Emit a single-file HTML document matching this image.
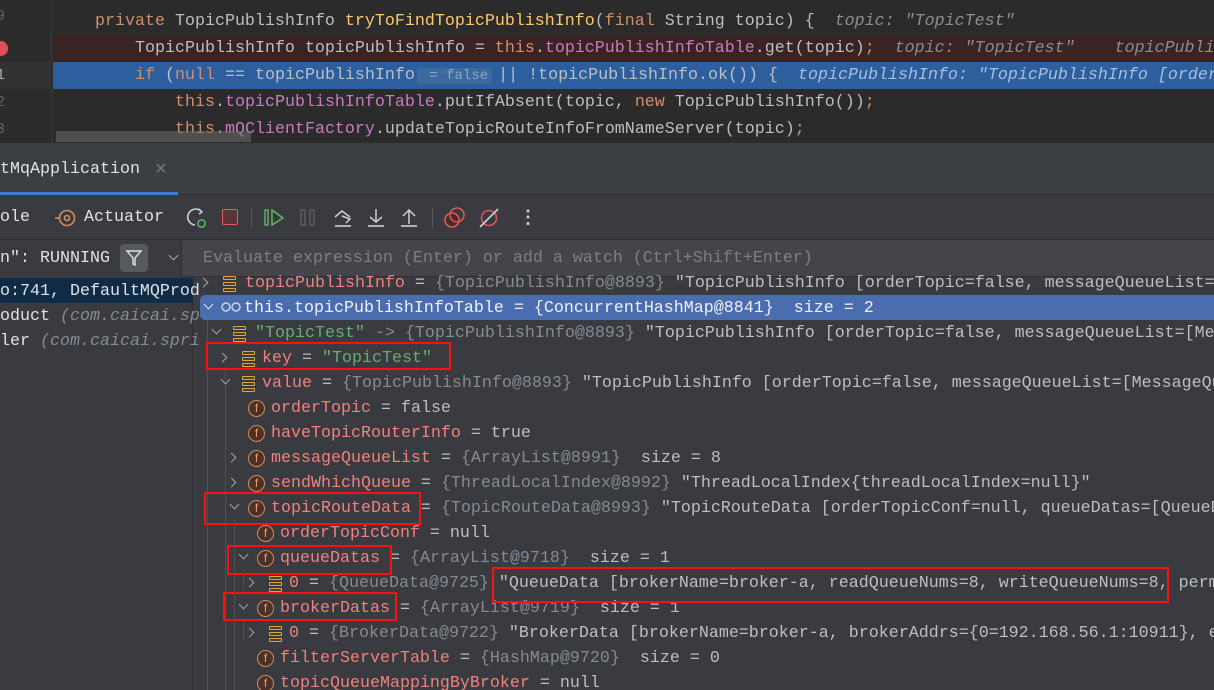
<!DOCTYPE html>
<html><head><meta charset="utf-8">
<style>
*{margin:0;padding:0;box-sizing:border-box}
html,body{width:1214px;height:690px;overflow:hidden}
body{background:#393b40;font-family:"Liberation Mono",monospace;font-size:16.67px;color:#bcbec4}
#wrap{position:relative;width:1214px;height:690px;overflow:hidden}
.a{position:absolute;white-space:pre}
.code{position:absolute;left:0;top:0;width:1214px;height:143px;background:#2b2b2b;overflow:hidden}
.cl{position:absolute;left:0;width:1214px;height:27px;line-height:27px;white-space:pre}
.kw{color:#cf8e6d}.fd{color:#c77dbb}.mt{color:#ffc66d}.hint{color:#8a8d92;font-style:italic}
.n{color:#f0817d}.g{color:#868a91}.s{color:#6aab73}
.chev{position:absolute;width:7px;height:7px;border-right:1.6px solid #a0a3a8;border-bottom:1.6px solid #a0a3a8}
.cr{transform:rotate(-45deg)}.cd{transform:rotate(45deg)}
.st{position:absolute;width:13px;height:16px}
.st i{display:block;height:4px;border:1.5px solid #d9a843;border-radius:1px;margin-bottom:2px;background:#4a4030}
.f{position:absolute;width:17px;height:17px;border:1.5px solid #d98a5c;border-radius:50%;background:#4b3228;color:#e89a6c;font-size:12px;line-height:14px;text-align:center;font-family:"Liberation Sans",sans-serif}
.box{position:absolute;border:2px solid #ff1010}
</style></head><body><div id="wrap">
<div class="code">
 <div style="position:absolute;left:0;top:0;width:52px;height:143px;background:#2b2b2b;border-right:1px solid #3a3a3a"></div>
 <div style="position:absolute;left:0;top:62px;width:52px;height:27px;background:#323232"></div>
 <div style="position:absolute;left:53px;top:35px;width:1161px;height:27px;background:#3a2323"></div>
 <div style="position:absolute;left:53px;top:62px;width:1161px;height:27px;background:#2d5f9e"></div>
 <div class="a" style="left:-4px;top:8px;color:#666;font-size:15px">9</div>
 <div class="a" style="left:-4px;top:62px;line-height:27px;color:#aaa;font-size:15px">1</div>
 <div class="a" style="left:-4px;top:89px;line-height:27px;color:#666;font-size:15px">2</div>
 <div class="a" style="left:-4px;top:116px;line-height:27px;color:#666;font-size:15px">3</div>
 <div style="position:absolute;left:-6px;top:41px;width:14px;height:15px;border-radius:50%;background:#e0505a"></div>
 <div class="cl" style="top:8px;left:95px"><span class="kw">private </span>TopicPublishInfo <span class="mt">tryToFindTopicPublishInfo</span>(<span class="kw">final </span>String topic) {  <span class="hint">topic: "TopicTest"</span></div>
 <div class="cl" style="top:35px;left:135px">TopicPublishInfo topicPublishInfo = <span class="kw">this</span>.<span class="fd">topicPublishInfoTable</span>.get(topic)<span class="kw">;</span>  <span class="hint">topic: "TopicTest"    topicPublishInfo</span></div>
 <div class="cl" style="top:62px;left:135px"><span class="kw">if </span>(<span class="kw">null </span>== topicPublishInfo<span style="background:#3d6a9e;color:#8fa8c4;border-radius:3px;font-size:14px;padding:0 4px;margin:0 6px 0 2px"> = false</span>|| !topicPublishInfo.ok()) {  <span class="hint" style="color:#a8bfdc">topicPublishInfo: "TopicPublishInfo [orderTopic</span></div>
 <div class="cl" style="top:89px;left:175px"><span class="kw">this</span>.<span class="fd">topicPublishInfoTable</span>.putIfAbsent(topic, <span class="kw">new </span>TopicPublishInfo())<span class="kw">;</span></div>
 <div class="cl" style="top:116px;left:175px"><span class="kw">this</span>.<span class="fd">mQClientFactory</span>.updateTopicRouteInfoFromNameServer(topic)<span class="kw">;</span></div>
 <div style="position:absolute;left:56px;top:131px;width:195px;height:11px;background:rgba(110,110,110,.55)"></div>
</div>
<div style="position:absolute;left:0;top:143px;width:1214px;height:52px;background:#3b3e42;border-bottom:1px solid #2e3033"></div>
<div class="a" style="left:0;top:158px;line-height:24px;color:#dfe1e5">tMqApplication</div>
<div class="a" style="left:155px;top:157px;line-height:24px;color:#777;font-family:'Liberation Sans',sans-serif;font-size:20px">×</div>
<div style="position:absolute;left:0;top:192px;width:178px;height:3px;background:#3d7ece"></div>
<div style="position:absolute;left:0;top:196px;width:1214px;height:44px;background:#393b40;border-bottom:1px solid #2e3033"></div>
<div class="a" style="left:0;top:206px;line-height:24px;color:#dfe1e5">ole</div>
<svg class="a" style="left:55px;top:208px" width="22" height="20"><circle cx="12" cy="10" r="7.5" fill="none" stroke="#d98a5c" stroke-width="1.6"/><circle cx="12" cy="10" r="2.5" fill="none" stroke="#d98a5c" stroke-width="1.6"/><line x1="0" y1="10" x2="5" y2="10" stroke="#d98a5c" stroke-width="1.6"/></svg>
<div class="a" style="left:84px;top:206px;line-height:24px;color:#dfe1e5">Actuator</div>
<svg class="a" style="left:186px;top:207px" width="24" height="24"><path d="M15 4 A8 8 0 1 0 9 18" fill="none" stroke="#ced0d6" stroke-width="1.6"/><path d="M13 2 L16 5 L13 7" fill="none" stroke="#ced0d6" stroke-width="1.5"/><rect x="12" y="13" width="7" height="7" rx="3" fill="none" stroke="#5fb865" stroke-width="1.5"/></svg>
<div style="position:absolute;left:222px;top:209px;width:16px;height:16px;border:1.6px solid #e55b5b;border-radius:2px;background:#5b3434"></div>
<div style="position:absolute;left:251px;top:208px;width:1px;height:20px;background:#55585c"></div>
<svg class="a" style="left:264px;top:208px" width="22" height="20"><rect x="1" y="2" width="3" height="15" fill="none" stroke="#5fb865" stroke-width="1.4"/><path d="M8 2 L19 10 L8 17 Z" fill="none" stroke="#5fb865" stroke-width="1.5"/></svg>
<svg class="a" style="left:300px;top:208px" width="16" height="20"><rect x="1" y="2" width="4" height="15" fill="none" stroke="#5c5f63" stroke-width="1.4"/><rect x="10" y="2" width="4" height="15" fill="none" stroke="#5c5f63" stroke-width="1.4"/></svg>
<svg class="a" style="left:333px;top:207px" width="20" height="22"><path d="M2 10 L9 4 L17 10 M9 9 L17 12 L13 16" fill="none" stroke="#ced0d6" stroke-width="1.5"/><line x1="2" y1="19" x2="18" y2="19" stroke="#ced0d6" stroke-width="1.6"/></svg>
<svg class="a" style="left:366px;top:207px" width="20" height="22"><path d="M10 2 V15 M4 10 L10 15 L16 10" fill="none" stroke="#ced0d6" stroke-width="1.5"/><line x1="2" y1="19" x2="18" y2="19" stroke="#ced0d6" stroke-width="1.6"/></svg>
<svg class="a" style="left:399px;top:207px" width="20" height="22"><path d="M10 17 V4 M4 9 L10 3 L16 9" fill="none" stroke="#ced0d6" stroke-width="1.5"/><line x1="2" y1="19" x2="18" y2="19" stroke="#ced0d6" stroke-width="1.6"/></svg>
<div style="position:absolute;left:432px;top:208px;width:1px;height:20px;background:#55585c"></div>
<svg class="a" style="left:443px;top:206px" width="24" height="24"><circle cx="9" cy="14" r="7" fill="#4a2a2a" stroke="#e05555" stroke-width="1.6"/><circle cx="14" cy="9" r="7" fill="none" stroke="#e05555" stroke-width="1.6"/></svg>
<svg class="a" style="left:477px;top:206px" width="24" height="24"><circle cx="12" cy="12" r="7.5" fill="none" stroke="#e05555" stroke-width="1.6"/><line x1="3" y1="21" x2="21" y2="3" stroke="#ced0d6" stroke-width="1.6"/></svg>
<div class="a" style="left:519px;top:207px;color:#ced0d6;font-family:'Liberation Sans';font-weight:bold;font-size:18px">⋮</div>
<div style="position:absolute;left:0;top:240px;width:181px;height:37px;background:#393b40"></div>
<div style="position:absolute;left:181px;top:240px;width:1033px;height:37px;background:#43454a;border-left:1px solid #2e3033;border-bottom:1px solid #2e3033"></div>
<div class="a" style="left:0;top:247px;line-height:24px;color:#dfe1e5">n": RUNNING</div>
<div style="position:absolute;left:120px;top:244px;width:28px;height:28px;background:#56595e;border-radius:4px"></div>
<svg class="a" style="left:124px;top:248px" width="20" height="20"><path d="M3 3 H17 L11 10 V17 L9 16 V10 Z" fill="none" stroke="#dfe1e5" stroke-width="1.4"/></svg>
<div class="chev cd" style="left:170px;top:252px"></div>
<div class="a" style="left:203px;top:247px;line-height:24px;color:#7c7f85">Evaluate expression (Enter) or add a watch (Ctrl+Shift+Enter)</div>
<div style="position:absolute;left:0;top:277px;width:193px;height:413px;background:#393b40;border-right:1px solid #2e3033"></div>
<div style="position:absolute;left:0;top:278px;width:193px;height:25px;background:#0f2b45"></div>
<div class="a" style="left:0;top:279px;line-height:25px;color:#dfe1e5">o:741, DefaultMQProd</div>
<div class="a" style="left:0;top:304px;line-height:25px;color:#dfe1e5">oduct <i style="color:#868a91">(com.caicai.sp</i></div>
<div class="a" style="left:0;top:329px;line-height:25px;color:#dfe1e5">ler <i style="color:#868a91">(com.caicai.spri</i></div>
<div style="position:absolute;left:200px;top:295px;width:1014px;height:25px;background:#4a6db0;border-radius:5px 0 0 5px"></div>
<div style="position:absolute;left:207px;top:320px;width:1px;height:370px;background:#4d5055"></div>
<div style="position:absolute;left:225px;top:370px;width:1px;height:320px;background:#4d5055"></div>
<div style="position:absolute;left:234px;top:520px;width:1px;height:170px;background:#4d5055"></div>
<div style="position:absolute;left:243px;top:570px;width:1px;height:20px;background:#4d5055"></div>
<div style="position:absolute;left:243px;top:620px;width:1px;height:20px;background:#4d5055"></div>
<div class="chev cr" style="left:200px;top:279px"></div><div class="st" style="left:223px;top:276px"><i></i><i></i><i></i></div>
<div class="a" style="left:245px;top:271px;line-height:25px"><span class="n">topicPublishInfo</span> = <span class="g">{TopicPublishInfo@8893}</span> "TopicPublishInfo [orderTopic=false, messageQueueList=[</div>
<div class="chev cd" style="left:205px;top:301px;border-color:#dfe1e5"></div>
<svg class="a" style="left:221px;top:300px" width="20" height="14"><circle cx="5" cy="7" r="4" fill="none" stroke="#c9d3e8" stroke-width="1.5"/><circle cx="15" cy="7" r="4" fill="none" stroke="#c9d3e8" stroke-width="1.5"/></svg>
<div class="a" style="left:244px;top:296px;line-height:25px;color:#eef0f4">this.topicPublishInfoTable = {ConcurrentHashMap@8841}  size = 2</div>
<div class="chev cd" style="left:213px;top:326px"></div><div class="st" style="left:233px;top:326px"><i></i><i></i><i></i></div>
<div class="a" style="left:255px;top:321px;line-height:25px"><span class="s">"TopicTest"</span> <span class="g">-&gt; {TopicPublishInfo@8893}</span> "TopicPublishInfo [orderTopic=false, messageQueueList=[Me</div>
<div class="chev cr" style="left:219px;top:354px"></div><div class="st" style="left:242px;top:351px"><i></i><i></i><i></i></div>
<div class="a" style="left:262px;top:346px;line-height:25px"><span class="n">key</span> = <span class="s">"TopicTest"</span></div>
<div class="chev cd" style="left:222px;top:376px"></div><div class="st" style="left:242px;top:376px"><i></i><i></i><i></i></div>
<div class="a" style="left:262px;top:371px;line-height:25px"><span class="n">value</span> = <span class="g">{TopicPublishInfo@8893}</span> "TopicPublishInfo [orderTopic=false, messageQueueList=[MessageQu</div>
<div class="f" style="left:248px;top:400px">f</div>
<div class="a" style="left:271px;top:396px;line-height:25px"><span class="n">orderTopic</span> = false</div>
<div class="f" style="left:248px;top:425px">f</div>
<div class="a" style="left:271px;top:421px;line-height:25px"><span class="n">haveTopicRouterInfo</span> = true</div>
<div class="chev cr" style="left:228px;top:454px"></div><div class="f" style="left:248px;top:450px">f</div>
<div class="a" style="left:271px;top:446px;line-height:25px"><span class="n">messageQueueList</span> = <span class="g">{ArrayList@8991}</span>  size = 8</div>
<div class="chev cr" style="left:228px;top:479px"></div><div class="f" style="left:248px;top:475px">f</div>
<div class="a" style="left:271px;top:471px;line-height:25px"><span class="n">sendWhichQueue</span> = <span class="g">{ThreadLocalIndex@8992}</span> "ThreadLocalIndex{threadLocalIndex=null}"</div>
<div class="chev cd" style="left:231px;top:501px"></div><div class="f" style="left:248px;top:500px">f</div>
<div class="a" style="left:271px;top:496px;line-height:25px"><span class="n">topicRouteData</span> = <span class="g">{TopicRouteData@8993}</span> "TopicRouteData [orderTopicConf=null, queueDatas=[QueueD</div>
<div class="f" style="left:257px;top:525px">f</div>
<div class="a" style="left:280px;top:521px;line-height:25px"><span class="n">orderTopicConf</span> = null</div>
<div class="chev cd" style="left:240px;top:551px"></div><div class="f" style="left:257px;top:550px">f</div>
<div class="a" style="left:280px;top:546px;line-height:25px"><span class="n">queueDatas</span> = <span class="g">{ArrayList@9718}</span>  size = 1</div>
<div class="chev cr" style="left:246px;top:579px"></div><div class="st" style="left:269px;top:576px"><i></i><i></i><i></i></div>
<div class="a" style="left:289px;top:571px;line-height:25px"><span class="n">0</span> = <span class="g">{QueueData@9725}</span> "QueueData [brokerName=broker-a, readQueueNums=8, writeQueueNums=8, perm</div>
<div class="chev cd" style="left:240px;top:601px"></div><div class="f" style="left:257px;top:600px">f</div>
<div class="a" style="left:280px;top:596px;line-height:25px"><span class="n">brokerDatas</span> = <span class="g">{ArrayList@9719}</span>  size = 1</div>
<div class="chev cr" style="left:246px;top:629px"></div><div class="st" style="left:269px;top:626px"><i></i><i></i><i></i></div>
<div class="a" style="left:289px;top:621px;line-height:25px"><span class="n">0</span> = <span class="g">{BrokerData@9722}</span> "BrokerData [brokerName=broker-a, brokerAddrs={0=192.168.56.1:10911}, e</div>
<div class="f" style="left:257px;top:650px">f</div>
<div class="a" style="left:280px;top:646px;line-height:25px"><span class="n">filterServerTable</span> = <span class="g">{HashMap@9720}</span>  size = 0</div>
<div class="f" style="left:257px;top:675px">f</div>
<div class="a" style="left:280px;top:671px;line-height:25px"><span class="n">topicQueueMappingByBroker</span> = null</div>
<div class="box" style="left:206px;top:342px;width:245px;height:28px"></div>
<div class="box" style="left:204px;top:492px;width:217px;height:33px"></div>
<div class="box" style="left:227px;top:545px;width:165px;height:30px"></div>
<div class="box" style="left:492px;top:567px;width:677px;height:36px"></div>
<div class="box" style="left:223px;top:592px;width:174px;height:29px"></div>
</div></body></html>
